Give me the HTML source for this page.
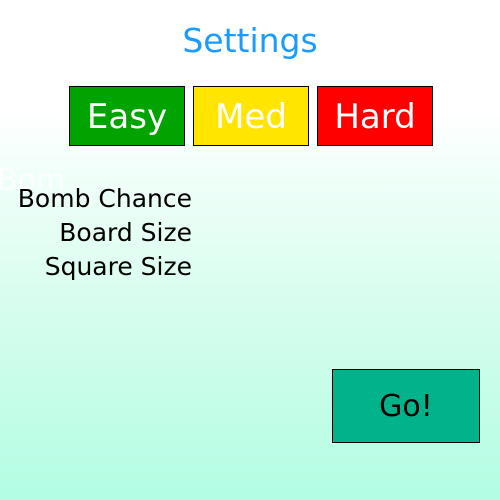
<!DOCTYPE html>
<html><head><style>
html,body{margin:0;padding:0;}
body{width:500px;height:500px;position:relative;overflow:hidden;
background:linear-gradient(to bottom,#ffffff 0%,#ffffff 22%,#f0fff9 35%,#d8fdee 60%,#b2fde3 100%);
font-family:"DejaVu Sans","Liberation Sans",sans-serif;}
.t{position:absolute;white-space:nowrap;}
.b{position:absolute;box-sizing:border-box;border:1px solid #000;color:#fff;text-align:center;font-size:34px;}
</style></head><body>
<div class="t" style="left:0;width:500px;top:20px;text-align:center;color:#1a9bff;font-size:33px;line-height:42px;">Settings</div>
<div class="b" style="left:69px;top:86px;width:116px;height:60px;background:#00a300;line-height:60px;">Easy</div>
<div class="b" style="left:193px;top:86px;width:116px;height:60px;background:#ffe500;line-height:60px;">Med</div>
<div class="b" style="left:317px;top:86px;width:116px;height:60px;background:#ff0000;line-height:60px;">Hard</div>
<div class="t" style="left:-3px;top:163px;color:#fff;font-size:30px;line-height:36px;opacity:0.8;">Bom</div>
<div class="t" style="right:308px;top:182px;font-size:25px;line-height:34px;text-align:right;color:#000;">Bomb Chance<br>Board Size<br>Square Size</div>
<div class="b" style="left:332px;top:369px;width:148px;height:74px;background:#00b38a;color:#000;font-size:30px;line-height:74px;">Go!</div>
</body></html>
